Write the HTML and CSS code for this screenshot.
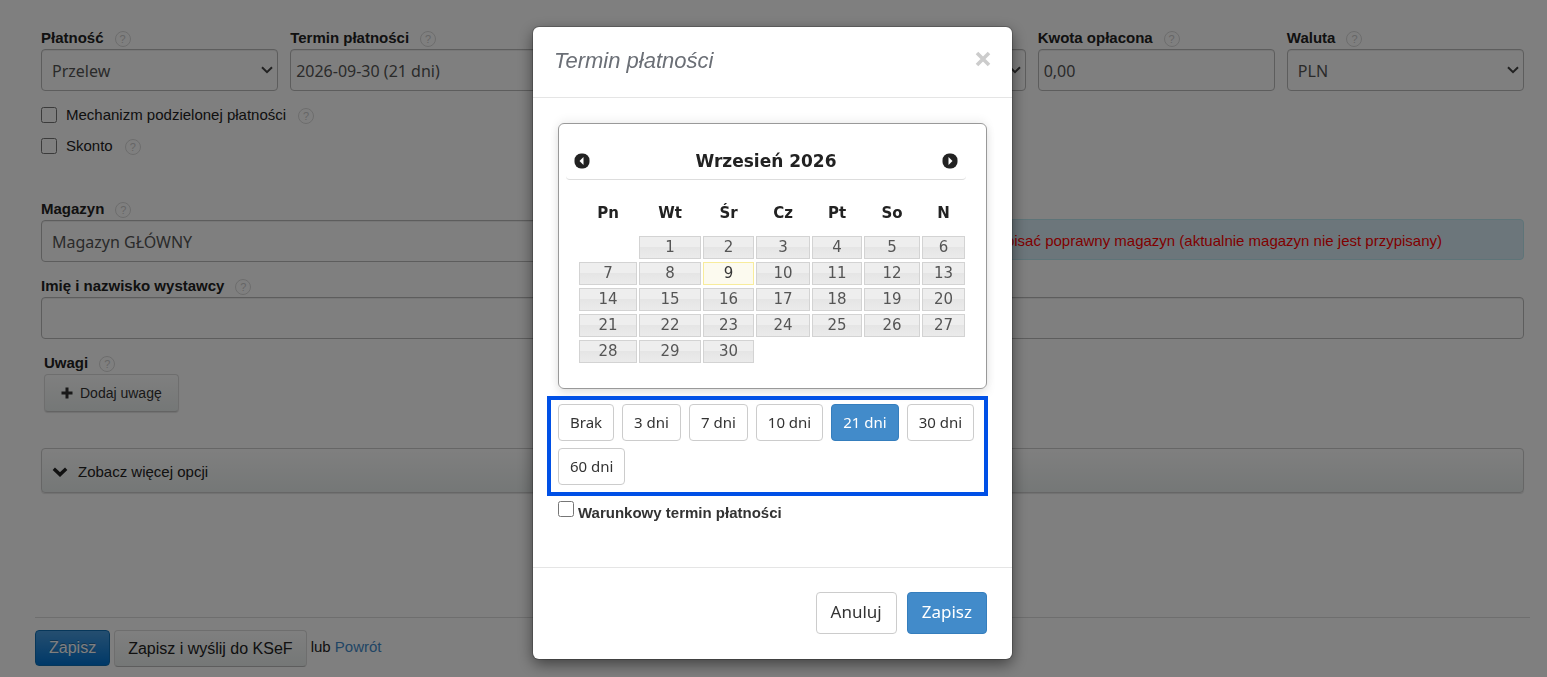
FILE: index.html
```html
<!DOCTYPE html>
<html lang="pl">
<head>
<meta charset="utf-8">
<title>Termin płatności</title>
<link rel="stylesheet" href="styles.css">
</head>
<body>
<form class="invoice">
  <div class="fields">
    <div class="columns">
      <div class="field">
        <div class="field-head"><label for="payment">Płatność</label><span class="help">?</span></div>
        <select class="control" id="payment"><option>Przelew</option></select>
      </div>
      <div class="field span-2">
        <div class="field-head"><label for="term">Termin płatności</label><span class="help">?</span></div>
        <input class="control control-text" id="term" type="text" value="2026-09-30 (21 dni)">
      </div>
      <div class="field">
        <select class="control" aria-label="Status"><option></option></select>
      </div>
      <div class="field">
        <div class="field-head"><label for="paid">Kwota opłacona</label><span class="help">?</span></div>
        <input class="control control-text" id="paid" type="text" value="0,00">
      </div>
      <div class="field">
        <div class="field-head"><label for="currency">Waluta</label><span class="help">?</span></div>
        <select class="control" id="currency"><option>PLN</option></select>
      </div>
    </div>
    <div class="checks">
      <div class="check"><input type="checkbox" id="split"><label for="split">Mechanizm podzielonej płatności</label><span class="help">?</span></div>
      <div class="check"><input type="checkbox" id="discount"><label for="discount">Skonto</label><span class="help">?</span></div>
    </div>
    <div class="columns">
      <div class="field span-3">
        <div class="field-head"><label for="warehouse">Magazyn</label><span class="help">?</span></div>
        <select class="control" id="warehouse"><option>Magazyn GŁÓWNY</option></select>
      </div>
      <div class="alert span-3">przypisać poprawny magazyn (aktualnie magazyn nie jest przypisany)</div>
    </div>
    <div class="field issuer">
      <div class="field-head"><label for="issuer">Imię i nazwisko wystawcy</label><span class="help">?</span></div>
      <input class="control" id="issuer" type="text">
    </div>
    <div class="notes">
      <div class="field-head"><span class="caption">Uwagi</span><span class="help">?</span></div>
      <button class="add-note" type="button">
        <svg width="12" height="12" viewBox="0 0 12 12" aria-hidden="true"><path d="M4.5 0.5h3v4h4v3h-4v4h-3v-4h-4v-3h4z" fill="#333"/></svg>
        Dodaj uwagę
      </button>
    </div>
    <button class="more" type="button">
      <svg width="16" height="10" viewBox="0 0 16 10" aria-hidden="true"><path d="M1.8 1.8L8 7.6l6.200-5.800" fill="none" stroke="#222" stroke-width="3.400"/></svg>
      Zobacz więcej opcji
    </button>
  </div>
  <div class="actions">
    <button class="action action-main" type="button">Zapisz</button>
    <button class="action" type="button">Zapisz i wyślij do KSeF</button>
    <span class="or">lub <a href="#">Powrót</a></span>
  </div>
</form>

<div class="backdrop">
  <div class="modal" role="dialog" aria-labelledby="modal-title">
    <div class="modal-header">
      <h2 id="modal-title">Termin płatności</h2>
      <button class="close" type="button" aria-label="Zamknij">
        <svg width="16" height="16" viewBox="0 0 16 16"><path d="M2 2l12 12M14 2L2 14" stroke="#ccc" stroke-width="3.600" fill="none"/></svg>
      </button>
    </div>
    <div class="modal-body">
      <div class="calendar">
        <div class="calendar-header">
          <button class="nav" type="button" aria-label="Poprzedni"><svg width="16" height="16" viewBox="0 0 16 16"><rect x=".5" y=".5" width="15" height="15" rx="6.500" fill="#222"/><path d="M9.500 4v8L5.500 8z" fill="#fff"/></svg></button>
          <span>Wrzesień 2026</span>
          <button class="nav" type="button" aria-label="Następny"><svg width="16" height="16" viewBox="0 0 16 16"><rect x=".5" y=".5" width="15" height="15" rx="6.500" fill="#222"/><path d="M6.500 4v8L10.500 8z" fill="#fff"/></svg></button>
        </div>
        <table class="days">
          <colgroup><col class="d1"><col class="d2"><col class="d3"><col class="d4"><col class="d5"><col class="d6"><col class="d7"></colgroup>
          <thead><tr><th>Pn</th><th>Wt</th><th>Śr</th><th>Cz</th><th>Pt</th><th>So</th><th>N</th></tr></thead>
          <tbody>
            <tr><td></td><td><a href="#">1</a></td><td><a href="#">2</a></td><td><a href="#">3</a></td><td><a href="#">4</a></td><td><a href="#">5</a></td><td><a href="#">6</a></td></tr>
            <tr><td><a href="#">7</a></td><td><a href="#">8</a></td><td><a class="today" href="#">9</a></td><td><a href="#">10</a></td><td><a href="#">11</a></td><td><a href="#">12</a></td><td><a href="#">13</a></td></tr>
            <tr><td><a href="#">14</a></td><td><a href="#">15</a></td><td><a href="#">16</a></td><td><a href="#">17</a></td><td><a href="#">18</a></td><td><a href="#">19</a></td><td><a href="#">20</a></td></tr>
            <tr><td><a href="#">21</a></td><td><a href="#">22</a></td><td><a href="#">23</a></td><td><a href="#">24</a></td><td><a href="#">25</a></td><td><a href="#">26</a></td><td><a href="#">27</a></td></tr>
            <tr><td><a href="#">28</a></td><td><a href="#">29</a></td><td><a href="#">30</a></td><td></td><td></td><td></td><td></td></tr>
          </tbody>
        </table>
      </div>
      <div class="presets">
        <button class="preset" type="button">Brak</button>
        <button class="preset" type="button">3 dni</button>
        <button class="preset" type="button">7 dni</button>
        <button class="preset" type="button">10 dni</button>
        <button class="preset selected" type="button">21 dni</button>
        <button class="preset" type="button">30 dni</button>
        <button class="preset" type="button">60 dni</button>
      </div>
      <div class="conditional"><input type="checkbox" id="conditional"><label for="conditional">Warunkowy termin płatności</label></div>
    </div>
    <div class="modal-footer">
      <button class="btn" type="button">Anuluj</button>
      <button class="btn btn-primary" type="button">Zapisz</button>
    </div>
  </div>
</div>
</body>
</html>
```
FILE: styles.css
```css
* { box-sizing: border-box; }
body {
  margin: 0;
  background: #fff;
  color: #222;
  font: 15px/20px "Liberation Sans", Arial, sans-serif;
}
button { font: inherit; color: #333; cursor: pointer; }
input[type="checkbox"] { width: 16px; height: 16px; margin: 0; flex: none; }

.invoice { padding: 28px 17px 0 35px; }
.fields { padding: 0 6px; }
.columns { display: grid; grid-template-columns: repeat(6, 1fr); gap: 12px; align-items: end; }
.span-2 { grid-column: span 2; }
.span-3 { grid-column: span 3; }
.field-head { display: flex; align-items: center; gap: 11px; height: 21px; padding-bottom: 1px; }
.field-head label, .caption { font-weight: bold; }
.help {
  width: 16px;
  height: 16px;
  margin-top: 2px;
  border: 1px solid #dadada;
  border-radius: 50%;
  color: #ccc;
  font-size: 11px;
  line-height: 14px;
  text-align: center;
}
.control {
  display: block;
  width: 100%;
  height: 42px;
  padding: 2px 10px 0;
  border: 1px solid #bbb;
  border-radius: 4px;
  background-color: #fff;
  box-shadow: inset 0 1px 1px rgba(0, 0, 0, .075);
  color: #555;
  font: 16px/20px "Noto Sans", sans-serif;
}
.control-text { padding: 2px 5px 0; }
select.control {
  appearance: none;
  background: #fff url("data:image/svg+xml,%3Csvg xmlns='http://www.w3.org/2000/svg' width='12' height='8'%3E%3Cpath d='M1 1.200l5 5 5-5' fill='none' stroke='%23444' stroke-width='2'/%3E%3C/svg%3E") no-repeat right 4px center;
}

.checks { display: flex; flex-direction: column; gap: 11px; padding: 14px 0 43px; }
.check { display: flex; align-items: center; }
.check label { padding: 0 12px 0 9px; }

.alert {
  align-self: end;
  height: 41px;
  margin-bottom: 2px;
  padding: 11px 81px 8px 15px;
  border: 1px solid #bce8f1;
  border-radius: 4px;
  background: #d9edf7;
  color: #f00;
  text-align: right;
}
.issuer { padding-top: 14px; }
.notes { padding: 14px 0 36px 3px; }
.add-note, .more {
  display: flex;
  align-items: center;
  border: 1px solid #ddd;
  border-bottom-color: #c8c8c8;
  border-radius: 4px;
  background: linear-gradient(#fff, #eaefee);
  box-shadow: 0 1px 1px rgba(0, 0, 0, .12);
}
.add-note { gap: 7px; height: 38px; padding: 0 16px; font-size: 14px; }
.more { gap: 10px; width: 100%; height: 45px; padding: 2px 10px 0; border-color: #ccc; color: #222; }

.actions { display: flex; align-items: flex-start; gap: 4px; margin-top: 124px; padding-top: 12px; border-top: 1px solid #ddd; }
.action {
  height: 37px;
  padding: 0 13px;
  border: 1px solid #ddd;
  border-bottom-color: #bbb;
  border-radius: 4px;
  background: linear-gradient(#fff, #eaefee);
  color: #222;
  font-size: 16px;
}
.action-main {
  height: 36px;
  border-color: #0e6fb5;
  background: linear-gradient(#4a9de0, #0072d0);
  color: #fff;
  text-shadow: 0 -1px 0 rgba(0, 0, 0, .3);
}
.or { padding-top: 7px; }
.or a { color: #428bca; text-decoration: none; }

.backdrop {
  position: fixed;
  inset: 0;
  display: flex;
  justify-content: center;
  align-items: flex-start;
  padding: 27px 16px 0 14px;
  background: rgba(0, 0, 0, .5);
}
.modal {
  width: 100%;
  max-width: 479px;
  border-radius: 6px;
  background: #fff;
  box-shadow: 0 0 0 1px rgba(0, 0, 0, .2), 0 5px 15px rgba(0, 0, 0, .5);
  color: #333;
}
.modal-header {
  display: flex;
  justify-content: space-between;
  align-items: flex-start;
  padding: 18px 21px 20px;
  border-bottom: 1px solid #e5e5e5;
}
.modal-header h2 { margin: 0; color: #6b6f76; font-size: 22px; line-height: 32px; font-weight: normal; font-style: italic; }
.close, .nav { display: block; padding: 0; border: 0; background: none; }
.close { padding-top: 6px; }
.close svg, .nav svg { display: block; }
.modal-body { padding: 25px 25px 44px; }
.calendar {
  padding: 13px 20px 24px 7px;
  border: 1px solid #999;
  border-radius: 6px;
  box-shadow: 0 5px 10px rgba(0, 0, 0, .1), 0 -3px 10px rgba(0, 0, 0, .06);
  color: #222;
  font-family: "DejaVu Sans", Verdana, sans-serif;
}
.calendar-header {
  display: flex;
  justify-content: space-between;
  align-items: center;
  height: 43px;
  padding: 5px 8px 0;
  border-bottom: 1px solid #ddd;
  border-radius: 4px;
  font-size: 17px;
  font-weight: bold;
}
.days { width: calc(100% - 12px); margin: 12px 0 0 12px; border-collapse: collapse; table-layout: fixed; }
.days th { height: 42px; padding: 0; font-size: 15px; }
.days td { height: 26px; padding: 1px; }
.days a {
  display: block;
  border: 1px solid #d3d3d3;
  background: linear-gradient(#eee 0 50%, #e5e5e5 50%, #ebebeb);
  color: #555;
  font-size: 15px;
  line-height: 21px;
  text-align: center;
  text-decoration: none;
}
.days .today { border-color: #f8ec9c; background: #fcfaef; color: #363636; }
.d1 { width: 60px; }
.d2 { width: 64px; }
.d3 { width: 53px; }
.d4 { width: 56px; }
.d5 { width: 52px; }
.d6 { width: 58px; }
.d7 { width: 45px; }

.presets { position: relative; display: flex; flex-wrap: wrap; gap: 7px 8px; margin-top: 15px; }
.presets::after {
  content: "";
  position: absolute;
  inset: -8px -1px -11px -11px;
  border: 4px solid #0050e6;
  pointer-events: none;
}
.preset, .btn {
  border: 1px solid #ccc;
  border-radius: 4px;
  background: #fff;
  color: #333;
  font-family: "Noto Sans", sans-serif;
}
.preset { height: 37px; padding: 0 11px 2px; font-size: 15px; }
.selected, .btn-primary { border-color: #357ebd; background: #428bca; color: #fff; }
.conditional { display: flex; align-items: flex-start; gap: 4px; margin-top: 16px; font-weight: bold; }
.conditional label { padding-top: 2px; }
.modal-footer { display: flex; justify-content: flex-end; gap: 10px; padding: 24px 25px 25px; border-top: 1px solid #e5e5e5; }
.btn { height: 42px; padding: 0 14px 2px; font-size: 17px; }
```
